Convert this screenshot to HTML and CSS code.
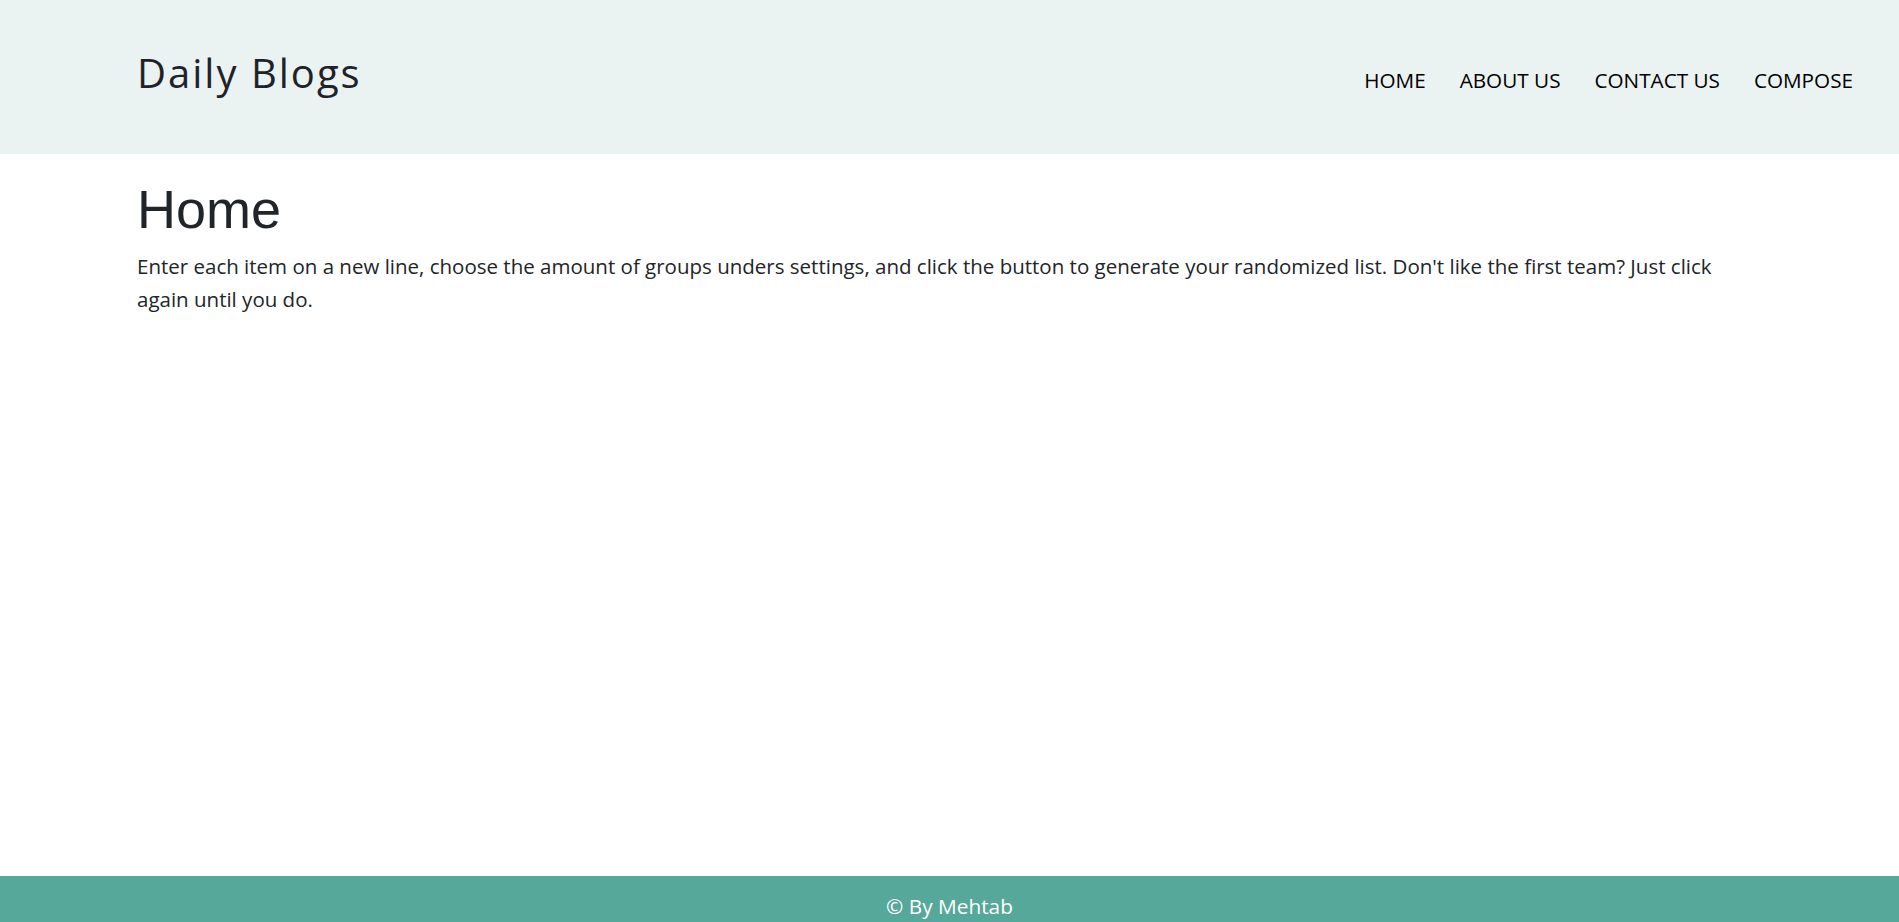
FILE: index.html
```html
<!DOCTYPE html>
<html lang="en">
<head>
<meta charset="utf-8">
<title>Daily Blogs</title>
<link rel="stylesheet" href="styles.css">
</head>
<body>
<header class="site-header">
  <a class="brand" href="#">Daily Blogs</a>
  <nav class="nav">
    <a class="nav-link" href="#">HOME</a>
    <a class="nav-link" href="#">ABOUT US</a>
    <a class="nav-link" href="#">CONTACT US</a>
    <a class="nav-link" href="#">COMPOSE</a>
  </nav>
</header>
<main class="content">
  <h1 class="page-title">Home</h1>
  <p class="intro">Enter each item on a new line, choose the amount of groups unders settings, and click the button to generate your randomized list. Don't like the first team? Just click again until you do.</p>
</main>
<footer class="site-footer">
  <p class="copy">© By Mehtab</p>
</footer>
</body>
</html>
```

FILE: styles.css
```css
html::-webkit-scrollbar {
  width: 4px;
}
html::-webkit-scrollbar-track {
  background: #f1f1f1;
}
html::-webkit-scrollbar-thumb {
  background: #c1c1c1;
  border-left: 1px solid #f1f1f1;
}

* {
  box-sizing: border-box;
}

body {
  margin: 0;
  font-family: "Open Sans", "Noto Sans", sans-serif;
  color: #212529;
  background: #ffffff;
}

.site-header {
  height: 154px;
  background: #eaf3f2;
  display: flex;
  align-items: baseline;
  justify-content: space-between;
  padding: 49px 46px 0 137px;
}

.brand {
  font-size: 40px;
  line-height: 48px;
  letter-spacing: 2px;
  color: #1f2329;
  text-decoration: none;
}

.nav {
  display: flex;
  gap: 34px;
}

.nav-link {
  font-size: 20.7px;
  line-height: 30px;
  color: #000000;
  text-decoration: none;
}

.content {
  min-height: 722px;
  padding: 22px 137px 0 137px;
}

.page-title {
  margin: 0;
  font-family: "Liberation Sans", Arial, sans-serif;
  font-weight: 400;
  font-size: 54px;
  line-height: 67px;
  color: #212529;
}

.intro {
  margin: 7px 0 0;
  font-size: 20.5px;
  line-height: 33px;
  color: #212529;
}

.site-footer {
  background: #56a89a;
  padding: 15px 0 78px;
  text-align: center;
}

.copy {
  margin: 0;
  font-size: 20.8px;
  line-height: 30px;
  color: #ffffff;
}
```
